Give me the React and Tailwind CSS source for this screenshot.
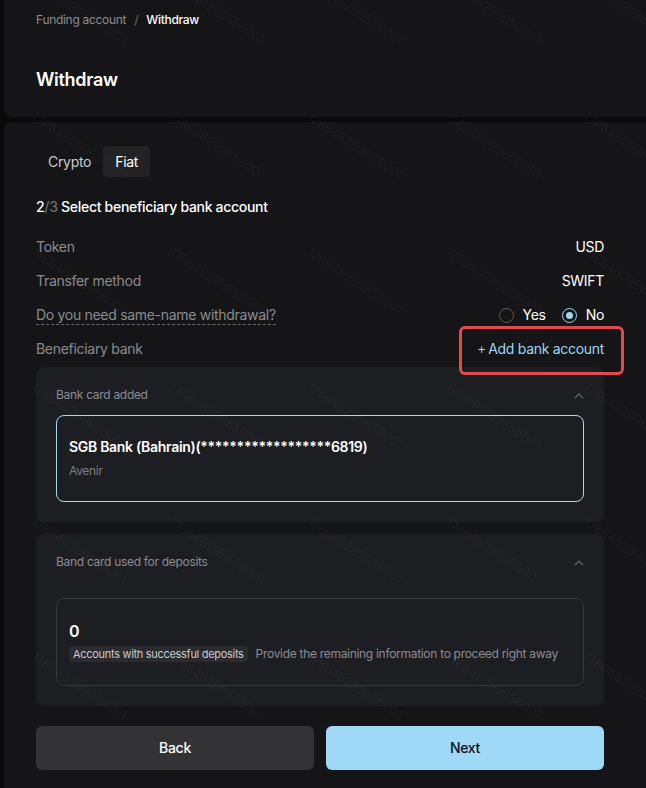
import { useState } from 'react';

const WATERMARK = '176646299656001';

// faint diagonal watermark grid over the whole page
const Watermarks = () => {
  const marks = [];
  for (let row = 0; row < 7; row++) {
    for (let col = 0; col < 5; col++) {
      marks.push({ left: 38 + col * 138, top: -27 + row * 135 });
    }
  }
  return (
    <div className="pointer-events-none absolute inset-0 overflow-hidden">
      {marks.map((m, i) => (
        <span
          key={i}
          className="absolute origin-top-left rotate-[33deg] whitespace-nowrap text-[13px] text-white/[0.045]"
          style={{ left: m.left, top: m.top }}
        >
          {WATERMARK}
        </span>
      ))}
    </div>
  );
};

const Chevron = () => (
  <svg width="10" height="6" viewBox="0 0 10 6" fill="none" className="mt-[1px]">
    <polyline points="1,5 5,1 9,5" stroke="#6b6c70" strokeWidth="1.1" />
  </svg>
);

const Row = ({ label, children }) => (
  <div className="flex h-5 items-center justify-between text-sm">
    {label}
    {children}
  </div>
);

const Radio = ({ checked, label, onClick, className = '' }) => (
  <button onClick={onClick} className={`flex items-center gap-[9px] ${className}`}>
    <span
      className={`flex h-[15px] w-[15px] items-center justify-center rounded-full border ${
        checked ? 'border-[#9fd6f5]' : 'border-[#5c5d61]'
      }`}
    >
      {checked && <span className="h-[7px] w-[7px] rounded-full bg-[#9fd6f5]" />}
    </span>
    {label}
  </button>
);

export default function App() {
  const [sameName, setSameName] = useState('no');

  return (
    <div
      className="relative h-[788px] w-full overflow-hidden bg-[#0a0a0b] pl-1 tracking-[-0.3px]"
      style={{ fontFamily: 'Inter, "Noto Sans", sans-serif' }}
    >
      {/* header card */}
      <div className="rounded-bl-lg bg-[#151517] pl-8 pr-[42px] pt-3 pb-[23px]">
        <div className="flex items-center gap-2 text-xs leading-4">
          <span className="text-[#8b8c91]">Funding account</span>
          <span className="text-[#6b6c70]">/</span>
          <span className="font-medium text-white">Withdraw</span>
        </div>
        <h1 className="mt-[38px] text-lg font-semibold leading-7 text-white">Withdraw</h1>
      </div>

      {/* main card */}
      <div className="mt-[5px] rounded-tl-lg bg-[#151517] pl-8 pr-[42px] pt-6 pb-6">
        <div className="flex items-center text-sm">
          <span className="px-3 text-[#c9cacd]">Crypto</span>
          <span className="flex h-[31px] items-center rounded bg-[#232326] px-3 text-white">Fiat</span>
        </div>

        <div className="mt-5 text-sm font-medium leading-5 text-white">
          2<span className="text-[#6b6c70]">/3</span> Select beneficiary bank account
        </div>

        <div className="mt-5 flex flex-col gap-[14px]">
          <Row label={<span className="text-[#8b8c91]">Token</span>}>
            <span className="text-white">USD</span>
          </Row>
          <Row label={<span className="text-[#8b8c91]">Transfer method</span>}>
            <span className="text-white">SWIFT</span>
          </Row>
          <Row
            label={
              <span className="border-b border-dashed border-[#6b6c70] leading-[19px] text-[#8b8c91]">
                Do you need same-name withdrawal?
              </span>
            }
          >
            <div className="flex items-center text-white">
              <Radio checked={sameName === 'yes'} label="Yes" onClick={() => setSameName('yes')} />
              <Radio
                checked={sameName === 'no'}
                label="No"
                onClick={() => setSameName('no')}
                className="ml-4"
              />
            </div>
          </Row>
          <Row label={<span className="text-[#8b8c91]">Beneficiary bank</span>}>
            <span className="relative flex items-center text-[#9fd6f5]">
              <span className="mr-[2px] text-[15px] font-light">+</span>Add bank account
              {/* highlight annotation */}
              <span className="absolute -left-[18px] -right-5 -top-3 -bottom-[15px] rounded-md border-[3px] border-[#e5484d]" />
            </span>
          </Row>
        </div>

        {/* bank card added */}
        <div className="mt-2 rounded-lg bg-[#1d1e21] px-5 pt-5 pb-5">
          <div className="flex items-center justify-between text-xs leading-4 text-[#8b8c91]">
            Bank card added
            <Chevron />
          </div>
          <div className="mt-3 rounded-lg border border-[#a8d9f2] pl-3 pr-3 pt-[21px] pb-[22px]">
            <div className="text-sm font-semibold leading-5 text-white">
              SGB Bank (Bahrain)(******************6819)
            </div>
            <div className="mt-[6px] text-xs leading-4 text-[#7d7e83]">Avenir</div>
          </div>
        </div>

        {/* deposit cards */}
        <div className="mt-3 rounded-lg bg-[#1d1e21] px-5 pt-5 pb-5">
          <div className="flex items-center justify-between text-xs leading-4 text-[#8b8c91]">
            Band card used for deposits
            <Chevron />
          </div>
          <div className="mt-7 rounded-lg border border-[#35363a] pl-3 pr-3 pt-5 pb-[23px]">
            <div className="text-base font-semibold leading-6 text-white">0</div>
            <div className="mt-[3px] flex items-center gap-2 whitespace-nowrap">
              <span className="flex h-4 items-center rounded-sm bg-[#2a2b2e] px-1 text-[11px] text-[#c9cacd]">
                Accounts with successful deposits
              </span>
              <span className="text-xs text-[#8b8c91]">
                Provide the remaining information to proceed right away
              </span>
            </div>
          </div>
        </div>

        <div className="mt-5 grid grid-cols-2 gap-3">
          <button className="h-11 rounded-md bg-[#333336] text-sm font-medium text-white">Back</button>
          <button className="h-11 rounded-md bg-[#a0d8f8] text-sm font-medium text-[#111113]">Next</button>
        </div>
      </div>

      <Watermarks />
    </div>
  );
}
